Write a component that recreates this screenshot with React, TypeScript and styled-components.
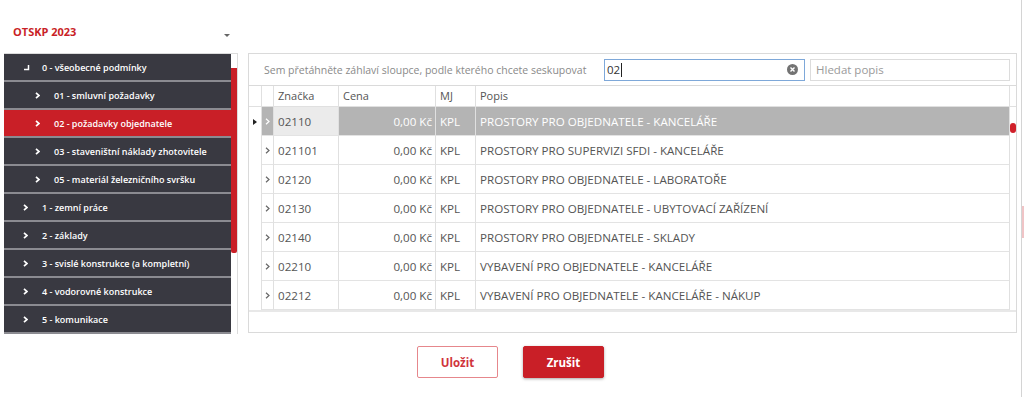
import React from 'react';
import styled, { createGlobalStyle } from 'styled-components';

const GlobalStyle = createGlobalStyle`
  html, body {
    margin: 0;
    padding: 0;
    background: #fff;
  }
  body {
    font-family: 'Open Sans', 'Liberation Sans', sans-serif;
    width: 1024px;
    height: 397px;
    overflow: hidden;
  }
`;

const RED = '#c91f27';

const Page = styled.div`
  display: flex;
  width: 1024px;
  height: 397px;
`;

const Main = styled.div`
  flex: 1;
  display: flex;
  flex-direction: column;
`;

const PageEdge = styled.div`
  width: 2px;
  border-left: 1px solid #d4d4d4;
  display: flex;
  flex-direction: column;

  .mark {
    margin-top: 206px;
    height: 32px;
    width: 2px;
    background: #f0c4c6;
  }
`;

const Top = styled.div`
  display: flex;
  gap: 10px;
  padding-left: 4px;
`;

const Sidebar = styled.div`
  width: 234px;
  display: flex;
  flex-direction: column;
`;

const SidebarHeader = styled.div`
  height: 53px;
  box-sizing: border-box;
  padding: 24px 8px 0 9px;
  display: flex;
  align-items: flex-start;
  justify-content: space-between;

  h1 {
    margin: 0;
    font-size: 11px;
    line-height: 16px;
    font-weight: 700;
    color: ${RED};
  }

  .caret {
    margin-top: 10px;
    width: 0;
    height: 0;
    border-left: 3px solid transparent;
    border-right: 3px solid transparent;
    border-top: 3px solid #666;
  }
`;

const Tree = styled.div`
  display: flex;
  height: 280px;
  border-top: 1px solid #dcdcdc;
  border-right: 1px solid #dcdcdc;
`;

const TreeList = styled.div`
  flex: 1;
  background: #393941;
  overflow: hidden;
`;

const TreeTrack = styled.div`
  width: 6px;
  display: flex;
  flex-direction: column;

  .thumb {
    margin-top: 14px;
    height: 185px;
    background: ${RED};
    border-radius: 0 0 2px 2px;
  }
`;

const TreeRow = styled.div<{ $level: number; $active?: boolean }>`
  height: 26px;
  border-bottom: 2px solid #8b8b91;
  display: flex;
  align-items: center;
  padding-left: ${(p) => 16 + p.$level * 12}px;
  background: ${(p) => (p.$active ? RED : '#393941')};
  color: #fff;
  font-size: 9px;
  font-weight: 600;
  white-space: nowrap;

  .icon {
    width: 22px;
    display: flex;
    align-items: center;
    padding-left: 3px;
    box-sizing: border-box;
  }
`;

const Panel = styled.div`
  flex: 1;
  margin-top: 53px;
  margin-right: 4px;
  height: 280px;
  box-sizing: border-box;
  border: 1px solid #dadada;
  display: flex;
  flex-direction: column;
`;

const GroupBar = styled.div`
  height: 31px;
  border-bottom: 1px solid #dadada;
  display: flex;
  align-items: center;
  padding: 0 6px 0 15px;
  gap: 5px;

  .hint {
    flex: 1;
    font-size: 10.5px;
    color: #8a8a8a;
    white-space: nowrap;
  }
`;

const SearchBox = styled.div<{ $focused?: boolean; $width: number }>`
  width: ${(p) => p.$width}px;
  height: 22px;
  box-sizing: border-box;
  border: 1px solid ${(p) => (p.$focused ? '#7ea8d9' : '#dcdcdc')};
  display: flex;
  align-items: center;
  padding: 0 6px 0 ${(p) => (p.$focused ? 2 : 5)}px;
  font-size: 11.5px;
  color: #333;

  .value {
    flex: 1;
    display: flex;
    align-items: center;
  }
  .cursor {
    width: 1px;
    height: 14px;
    background: #222;
    margin-left: 1px;
  }
  .placeholder {
    color: #9a9a9a;
  }
`;

const COLS = '13px 12px 65px 97px 40px 1fr';

const HeadRow = styled.div`
  display: flex;
  height: 20px;
  border-bottom: 1px solid #e0e0e0;
`;

const HeadCells = styled.div`
  flex: 1;
  display: grid;
  grid-template-columns: ${COLS};
`;

const HeadCell = styled.div`
  border-right: 1px solid #e0e0e0;
  padding: 0 4px;
  font-size: 11px;
  line-height: 20px;
  color: #555;
`;

const Body = styled.div`
  display: flex;
  height: 203px;
`;

const Rows = styled.div`
  flex: 1;
`;

const Track = styled.div`
  width: 6px;
  display: flex;
  flex-direction: column;

  .thumb {
    margin-top: 16px;
    height: 10px;
    border-radius: 3px;
    background: #d0202a;
  }
`;

const ScrollHead = styled.div`
  width: 6px;
`;

const Row = styled.div<{ $selected?: boolean }>`
  display: grid;
  grid-template-columns: ${COLS};
  height: 29px;
  font-size: 11.6px;
  color: ${(p) => (p.$selected ? '#fff' : '#555')};
`;

const Cell = styled.div<{ $align?: 'left' | 'right'; $bg?: string; $color?: string }>`
  box-sizing: border-box;
  border-right: 1px solid #e0e0e0;
  border-bottom: 1px solid #e3e3e3;
  display: flex;
  align-items: center;
  justify-content: ${(p) => (p.$align === 'right' ? 'flex-end' : 'flex-start')};
  padding: 0 3px 0 4px;
  background: ${(p) => p.$bg || 'transparent'};
  color: ${(p) => p.$color || 'inherit'};
  white-space: nowrap;
  overflow: hidden;
`;

const Indicator = styled.div`
  border-right: 1px solid #e0e0e0;
  display: flex;
  align-items: center;
  padding-left: 4px;
`;

const Expander = styled(Cell)`
  justify-content: center;
  padding: 0;
`;

const Footer = styled.div`
  flex: 1;
  border-top: 2px solid #e8e8e8;
`;

const Actions = styled.div`
  display: flex;
  justify-content: center;
  gap: 25px;
  margin-top: 12px;
`;

const Button = styled.button<{ $primary?: boolean }>`
  width: 81px;
  height: 32px;
  box-sizing: border-box;
  border-radius: 2px;
  font-family: 'Open Sans', 'Liberation Sans', sans-serif;
  font-size: 11.5px;
  font-weight: 700;
  cursor: pointer;
  border: 1px solid ${(p) => (p.$primary ? RED : '#e6878c')};
  background: ${(p) => (p.$primary ? RED : '#fff')};
  color: ${(p) => (p.$primary ? '#fff' : '#d0343c')};
  box-shadow: ${(p) => (p.$primary ? '0 1px 3px rgba(0,0,0,0.35)' : 'none')};
`;

const Chevron = ({ color, bold }: { color: string; bold?: boolean }) => (
  <svg width="5" height="7" viewBox="0 0 5 7">
    <polyline
      points="1,0.8 4,3.5 1,6.2"
      fill="none"
      stroke={color}
      strokeWidth={bold ? 1.7 : 1.2}
    />
  </svg>
);

const Expanded = () => (
  <svg width="7" height="7" viewBox="0 0 7 7">
    <path d="M5.5 1 V5.5 H1" fill="none" stroke="#fff" strokeWidth="1.5" />
  </svg>
);

const ClearIcon = () => (
  <svg width="11" height="11" viewBox="0 0 11 11">
    <circle cx="5.5" cy="5.5" r="5.5" fill="#737373" />
    <path d="M3.5 3.5 L7.5 7.5 M7.5 3.5 L3.5 7.5" stroke="#fff" strokeWidth="1.4" />
  </svg>
);

const Pointer = () => (
  <svg width="4" height="6" viewBox="0 0 4 6">
    <polygon points="0,0 4,3 0,6" fill="#222" />
  </svg>
);

const treeItems = [
  { level: 0, label: '0 - všeobecné podmínky', open: true },
  { level: 1, label: '01 - smluvní požadavky' },
  { level: 1, label: '02 - požadavky objednatele', active: true },
  { level: 1, label: '03 - staveništní náklady zhotovitele' },
  { level: 1, label: '05 - materiál železničního svršku' },
  { level: 0, label: '1 - zemní práce' },
  { level: 0, label: '2 - základy' },
  { level: 0, label: '3 - svislé konstrukce (a kompletní)' },
  { level: 0, label: '4 - vodorovné konstrukce' },
  { level: 0, label: '5 - komunikace' },
];

const rows = [
  { code: '02110', desc: 'PROSTORY PRO OBJEDNATELE - KANCELÁŘE' },
  { code: '021101', desc: 'PROSTORY PRO SUPERVIZI SFDI - KANCELÁŘE' },
  { code: '02120', desc: 'PROSTORY PRO OBJEDNATELE - LABORATOŘE' },
  { code: '02130', desc: 'PROSTORY PRO OBJEDNATELE - UBYTOVACÍ ZAŘÍZENÍ' },
  { code: '02140', desc: 'PROSTORY PRO OBJEDNATELE - SKLADY' },
  { code: '02210', desc: 'VYBAVENÍ PRO OBJEDNATELE - KANCELÁŘE' },
  { code: '02212', desc: 'VYBAVENÍ PRO OBJEDNATELE - KANCELÁŘE - NÁKUP' },
];

export default function App() {
  return (
    <Page>
      <GlobalStyle />
      <Main>
        <Top>
          <Sidebar>
            <SidebarHeader>
              <h1>OTSKP 2023</h1>
              <span className="caret" />
            </SidebarHeader>
            <Tree>
              <TreeList>
                {treeItems.map((item) => (
                  <TreeRow key={item.label} $level={item.level} $active={item.active}>
                    <span className="icon">
                      {item.open ? <Expanded /> : <Chevron color="#fff" bold />}
                    </span>
                    {item.label}
                  </TreeRow>
                ))}
              </TreeList>
              <TreeTrack>
                <div className="thumb" />
              </TreeTrack>
            </Tree>
          </Sidebar>

          <Panel>
            <GroupBar>
              <span className="hint">
                Sem přetáhněte záhlaví sloupce, podle kterého chcete seskupovat
              </span>
              <SearchBox $focused $width={201}>
                <span className="value">
                  02
                  <span className="cursor" />
                </span>
                <ClearIcon />
              </SearchBox>
              <SearchBox $width={200}>
                <span className="placeholder">Hledat popis</span>
              </SearchBox>
            </GroupBar>

            <HeadRow>
              <HeadCells>
                <HeadCell />
                <HeadCell />
                <HeadCell>Značka</HeadCell>
                <HeadCell>Cena</HeadCell>
                <HeadCell>MJ</HeadCell>
                <HeadCell>Popis</HeadCell>
              </HeadCells>
              <ScrollHead />
            </HeadRow>

            <Body>
              <Rows>
                {rows.map((r, i) => {
                  const sel = i === 0;
                  return (
                    <Row key={r.code} $selected={sel}>
                      <Indicator>{sel && <Pointer />}</Indicator>
                      <Expander $bg={sel ? '#b4b4b4' : undefined}>
                        <Chevron color={sel ? '#fff' : '#666'} />
                      </Expander>
                      <Cell $bg={sel ? '#ebebeb' : undefined} $color={sel ? '#555' : undefined}>
                        {r.code}
                      </Cell>
                      <Cell $align="right" $bg={sel ? '#b4b4b4' : undefined}>
                        0,00 Kč
                      </Cell>
                      <Cell $bg={sel ? '#b4b4b4' : undefined}>KPL</Cell>
                      <Cell $bg={sel ? '#b4b4b4' : undefined}>{r.desc}</Cell>
                    </Row>
                  );
                })}
              </Rows>
              <Track>
                <div className="thumb" />
              </Track>
            </Body>
            <Footer />
          </Panel>
        </Top>

        <Actions>
          <Button>Uložit</Button>
          <Button $primary>Zrušit</Button>
        </Actions>
      </Main>
      <PageEdge>
        <div className="mark" />
      </PageEdge>
    </Page>
  );
}
